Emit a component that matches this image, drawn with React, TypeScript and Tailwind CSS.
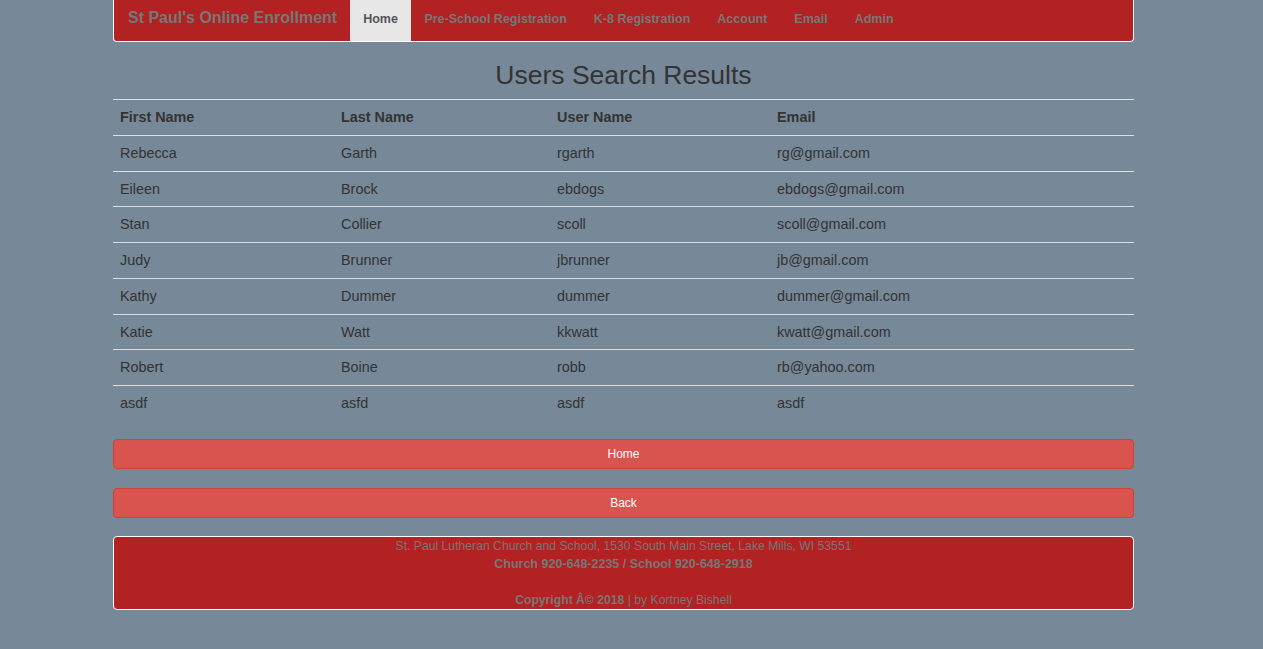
import React from "react";

const rows = [
  ["Rebecca", "Garth", "rgarth", "rg@gmail.com"],
  ["Eileen", "Brock", "ebdogs", "ebdogs@gmail.com"],
  ["Stan", "Collier", "scoll", "scoll@gmail.com"],
  ["Judy", "Brunner", "jbrunner", "jb@gmail.com"],
  ["Kathy", "Dummer", "dummer", "dummer@gmail.com"],
  ["Katie", "Watt", "kkwatt", "kwatt@gmail.com"],
  ["Robert", "Boine", "robb", "rb@yahoo.com"],
  ["asdf", "asfd", "asdf", "asdf"],
];

const navItems = ["Pre-School Registration", "K-8 Registration", "Account", "Email", "Admin"];

export default function App() {
  return (
    <div
      className="min-h-[649px] w-full bg-[#778899] text-[#333]"
      style={{ fontFamily: '"Liberation Sans", Arial, sans-serif' }}
    >
      <div className="ml-[113px] w-[1021px]">
        {/* Navbar */}
        <nav className="flex h-[42px] items-start rounded-b-[4px] border-x border-b border-white bg-[#b22222]">
          <div className="pl-[14px] pr-[13px] pt-[8px] text-[16px] leading-[20px] font-bold text-[#777]">
            St Paul's Online Enrollment
          </div>
          <div className="h-[41px] bg-[#e7e7e7] px-[13px] pt-[9px] text-[12.5px] leading-[20px] font-bold text-[#555]">
            Home
          </div>
          {navItems.map((n) => (
            <div key={n} className="px-[13.5px] pt-[9px] text-[12.5px] leading-[20px] font-bold text-[#777]">
              {n}
            </div>
          ))}
        </nav>

        {/* Heading */}
        <h1 className="mt-[17px] text-center text-[26.5px] leading-[32px] font-normal text-[#333]">
          Users Search Results
        </h1>

        {/* Table */}
        <table className="mt-[8px] w-full border-collapse text-[14.4px]">
          <thead>
            <tr className="border-t border-[#ddd]">
              <th className="w-[221px] px-[7px] py-[7px] text-left leading-[20.75px] font-bold">First Name</th>
              <th className="w-[216px] px-[7px] py-[7px] text-left leading-[20.75px] font-bold">Last Name</th>
              <th className="w-[220px] px-[7px] py-[7px] text-left leading-[20.75px] font-bold">User Name</th>
              <th className="px-[7px] py-[7px] text-left leading-[20.75px] font-bold">Email</th>
            </tr>
          </thead>
          <tbody>
            {rows.map((r, i) => (
              <tr key={i} className="border-t border-[#ddd]">
                {r.map((c, j) => (
                  <td key={j} className="px-[7px] py-[7px] leading-[20.75px]">
                    {c}
                  </td>
                ))}
              </tr>
            ))}
          </tbody>
        </table>

        {/* Buttons */}
        <div className="mt-[18px] flex h-[30px] items-center justify-center rounded-[4px] border border-[#d43f3a] bg-[#d9534f] text-[12px] text-white">
          Home
        </div>
        <div className="mt-[19px] flex h-[30px] items-center justify-center rounded-[4px] border border-[#d43f3a] bg-[#d9534f] text-[12px] text-white">
          Back
        </div>

        {/* Footer */}
        <footer className="mt-[18px] rounded-[4px] border border-white bg-[#b22222] text-center text-[12.2px] leading-[18px] text-[#777]">
          <div>St. Paul Lutheran Church and School, 1530 South Main Street, Lake Mills, WI 53551</div>
          <div className="text-[12.5px] font-bold">Church 920-648-2235 / School 920-648-2918</div>
          <div>&nbsp;</div>
          <div>
            <span className="font-bold">Copyright Â© 2018</span> | by Kortney Bishell
          </div>
        </footer>
      </div>
    </div>
  );
}
